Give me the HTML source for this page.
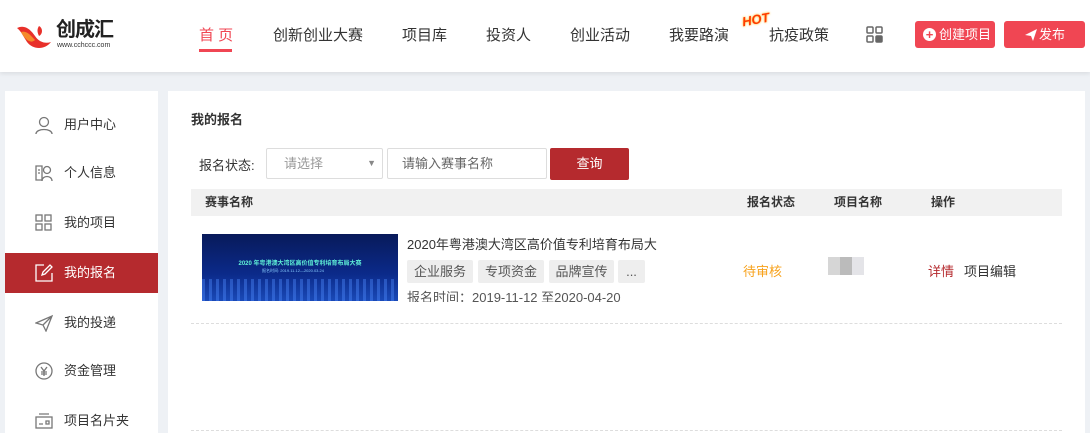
<!DOCTYPE html>
<html><head><meta charset="utf-8"><style>
*{margin:0;padding:0;box-sizing:border-box}
html,body{width:1090px;height:433px;overflow:hidden}
body{background:#eef1f5;font-family:"Liberation Sans","Noto Sans CJK SC",sans-serif;color:#333;position:relative}
.hdr{position:absolute;left:0;top:0;width:1090px;height:72px;background:#fff;box-shadow:0 2px 4px rgba(0,0,0,.08)}
.nav{position:absolute;top:24px;font-size:15px;color:#333}
.btn{position:absolute;top:21px;height:27px;background:#f04653;color:#fff;border-radius:3px;font-size:13px;line-height:27px}
.side{position:absolute;left:5px;top:91px;width:153px;height:342px;background:#fff}
.mi{position:absolute;left:0;width:153px;height:40px;font-size:13px;line-height:40px;padding-left:59px;color:#333}
.mi svg{position:absolute;left:30px;top:11px}
.main{position:absolute;left:168px;top:91px;width:917px;height:342px;background:#fff}
.tag{position:absolute;height:23px;background:#eee;color:#555;font-size:13px;line-height:23px;text-align:center;border-radius:2px}
</style></head><body>
<div class="hdr">
 <svg style="position:absolute;left:17px;top:22px" width="34" height="28" viewBox="0 0 34 28"><path d="M0 6 C8 2 14 8 18 14 C22 20 28 22 34 20 C28 28 16 28 10 20 C6 14 4 9 0 6Z" fill="#e8302a"/><path d="M4 10 C10 8 14 14 18 18 C14 22 8 18 4 10Z" fill="#f58a2a"/><path d="M22 4 C26 6 26 12 22 14 C20 10 20 7 22 4Z" fill="#e8302a"/></svg>
 <div style="position:absolute;left:56px;top:19px;font-size:20px;line-height:22px;font-weight:bold;color:#222;letter-spacing:-1px">创成汇</div>
 <div style="position:absolute;left:57px;top:42px;font-size:7px;line-height:8px;color:#333">www.cchccc.com</div>
 <div class="nav" style="left:199px;color:#f04653">首 页</div>
 <div style="position:absolute;left:199px;top:49px;width:33px;height:3px;background:#f04653"></div>
 <div class="nav" style="left:273px">创新创业大赛</div>
 <div class="nav" style="left:402px">项目库</div>
 <div class="nav" style="left:486px">投资人</div>
 <div class="nav" style="left:570px">创业活动</div>
 <div class="nav" style="left:669px">我要路演</div>
 <div style="position:absolute;left:742px;top:12px;font-size:13px;font-weight:bold;font-style:italic;color:#ff3b00;text-shadow:0 0 2px #ffb400;transform:rotate(-10deg)">HOT</div>
 <div class="nav" style="left:769px">抗疫政策</div>
 <svg style="position:absolute;left:866px;top:26px" width="17" height="17" viewBox="0 0 17 17" fill="none" stroke="#666" stroke-width="1.5"><rect x="1" y="1" width="6" height="6" rx="1"/><rect x="10" y="1" width="6" height="6" rx="1"/><rect x="1" y="10" width="6" height="6" rx="1"/><rect x="10" y="10" width="6" height="6" rx="1" fill="#666"/></svg>
 <div class="btn" style="left:915px;width:80px;padding-left:24px"><span style="position:absolute;left:8px;top:7px;width:13px;height:13px;border-radius:50%;background:#fff;color:#f04653;font-size:13px;line-height:13px;text-align:center;font-weight:bold">+</span>创建项目</div>
 <div class="btn" style="left:1004px;width:81px;padding-left:35px"><svg style="position:absolute;left:21px;top:8px" width="12" height="12" viewBox="0 0 12 12"><path d="M0 6 L12 0 L8 12 L6 7Z" fill="#fff"/></svg>发布</div>
</div>
<div class="side">
 <div class="mi" style="top:14px"><svg width="18" height="18" viewBox="0 0 18 18" fill="none" stroke="#777" stroke-width="1.3"><circle cx="9" cy="6" r="4.5"/><path d="M1 18 C1 12 17 12 17 18"/></svg>用户中心</div>
 <div class="mi" style="top:62px"><svg width="18" height="18" viewBox="0 0 18 18" fill="none" stroke="#777" stroke-width="1.3"><path d="M1 2h6v14H1z M3 6h2 M3 9h2"/><circle cx="12" cy="6" r="3.5"/><path d="M7 17 C7 11 17 11 17 17"/></svg>个人信息</div>
 <div class="mi" style="top:112px"><svg width="18" height="18" viewBox="0 0 18 18" fill="none" stroke="#777" stroke-width="1.3"><rect x="1" y="1" width="6" height="6"/><rect x="10" y="1" width="6" height="6"/><rect x="1" y="10" width="6" height="6"/><rect x="10" y="10" width="6" height="6"/></svg>我的项目</div>
 <div class="mi" style="top:162px;background:#b52a2e;color:#fff"><svg width="18" height="18" viewBox="0 0 18 18" fill="none" stroke="#fff" stroke-width="1.3"><path d="M9 1H1v16h16V9"/><path d="M7 11l1-3 7-7 2 2-7 7z"/></svg>我的报名</div>
 <div class="mi" style="top:212px"><svg width="18" height="18" viewBox="0 0 18 18" fill="none" stroke="#777" stroke-width="1.3"><path d="M1 9L17 2 11 17 8 11z M8 11L17 2"/></svg>我的投递</div>
 <div class="mi" style="top:260px"><svg width="18" height="18" viewBox="0 0 18 18" fill="none" stroke="#777" stroke-width="1.3"><circle cx="9" cy="9" r="8"/><path d="M6 5l3 4 3-4M9 9v5M6 10h6M6 12h6"/></svg>资金管理</div>
 <div class="mi" style="top:310px"><svg width="18" height="18" viewBox="0 0 18 18" fill="none" stroke="#777" stroke-width="1.3"><rect x="1" y="5" width="16" height="11"/><path d="M4 2h10 M4 12h4 M11 9h3v3h-3z"/></svg>项目名片夹</div>
</div>
<div class="main">
 <div style="position:absolute;left:23px;top:18px;font-size:13px;font-weight:bold">我的报名</div>
 <div style="position:absolute;left:31px;top:64px;font-size:13px;color:#333">报名状态:</div>
 <div style="position:absolute;left:98px;top:57px;width:117px;height:31px;border:1px solid #ddd;border-radius:2px;font-size:13px;color:#999;line-height:29px;padding-left:17px">请选择<span style="position:absolute;right:6px;font-size:9px;color:#888">▼</span></div>
 <div style="position:absolute;left:219px;top:57px;width:160px;height:31px;border:1px solid #ddd;border-radius:2px;font-size:13px;color:#666;line-height:29px;padding-left:14px">请输入赛事名称</div>
 <div style="position:absolute;left:382px;top:57px;width:79px;height:32px;background:#b52a2e;border-radius:2px;color:#fff;font-size:13px;line-height:32px;text-align:center">查询</div>
 <div style="position:absolute;left:23px;top:98px;width:871px;height:27px;background:#f1f1f1;font-size:12px;font-weight:bold;line-height:27px">
  <span style="position:absolute;left:14px">赛事名称</span><span style="position:absolute;left:556px">报名状态</span><span style="position:absolute;left:643px">项目名称</span><span style="position:absolute;left:740px">操作</span></div>
 <div style="position:absolute;left:34px;top:143px;width:196px;height:67px;background:linear-gradient(180deg,#081a5a,#0b2a8a 60%,#1a4ab8);overflow:hidden">
  <div style="position:absolute;left:0;top:24px;width:196px;text-align:center;font-size:6px;color:#5ff2d8;font-weight:bold">2020 年粤港澳大湾区高价值专利培育布局大赛</div>
  <div style="position:absolute;left:60px;top:34px;font-size:4px;color:#8cf">报名时间: 2019.11.12—2020.03.24</div>
  <div style="position:absolute;left:0;bottom:0;width:196px;height:22px;background:repeating-linear-gradient(90deg,rgba(80,140,255,.4) 0 3px,transparent 3px 7px)"></div>
 </div>
 <div style="position:absolute;left:239px;top:143px;font-size:13px;color:#333">2020年粤港澳大湾区高价值专利培育布局大</div>
 <div class="tag" style="left:239px;top:169px;width:66px">企业服务</div>
 <div class="tag" style="left:310px;top:169px;width:66px">专项资金</div>
 <div class="tag" style="left:381px;top:169px;width:65px">品牌宣传</div>
 <div class="tag" style="left:450px;top:169px;width:27px">...</div>
 <div style="position:absolute;left:239px;top:199px;height:12px;overflow:hidden;font-size:13px;color:#555;line-height:15px">报名时间：2019-11-12 至2020-04-20</div>
 <div style="position:absolute;left:575px;top:170px;font-size:13px;color:#f7a21c">待审核</div>
 <div style="position:absolute;left:660px;top:166px;width:36px;height:18px;background:linear-gradient(90deg,#d6d6d6 0 33%,#bbb 33% 66%,#e4e4e8 66%)"></div>
 <div style="position:absolute;left:760px;top:170px;font-size:13px;color:#b52a2e">详情</div>
 <div style="position:absolute;left:796px;top:170px;font-size:13px;color:#333">项目编辑</div>
 <div style="position:absolute;left:23px;top:232px;width:871px;border-top:1px dashed #ddd"></div>
 <div style="position:absolute;left:23px;top:339px;width:871px;border-top:1px dashed #ddd"></div>
</div>
</body></html>
